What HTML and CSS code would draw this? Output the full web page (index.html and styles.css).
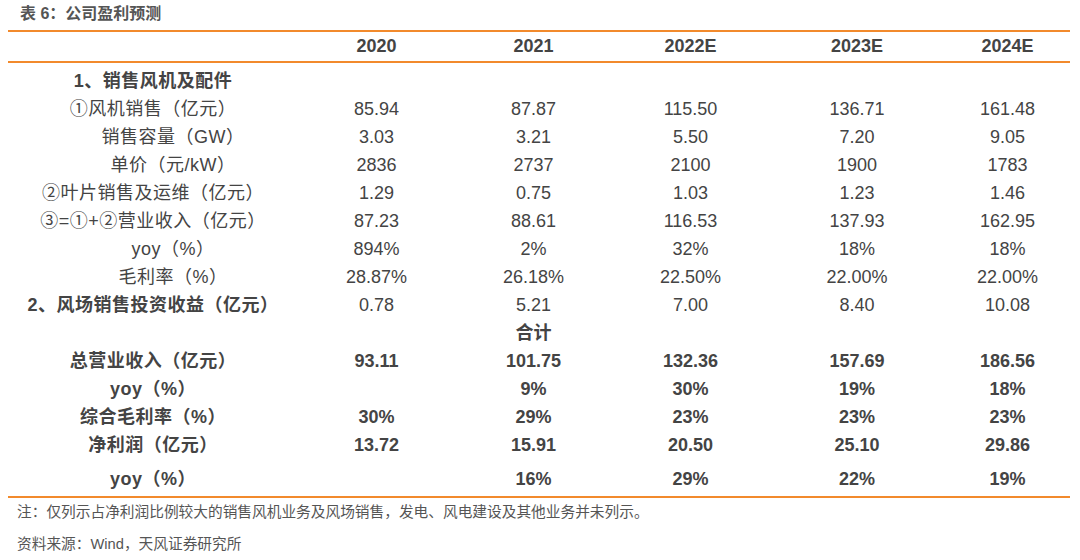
FILE: index.html
```html
<!DOCTYPE html>
<html lang="zh-CN">
<head>
<meta charset="utf-8">
<title>表 6：公司盈利预测</title>
<link rel="stylesheet" href="styles.css">
</head>
<body>
<div class="page">
  <div class="caption">表 6：公司盈利预测</div>
  <table class="forecast">
    <colgroup>
      <col class="c-label"><col class="c-a"><col class="c-a"><col class="c-a"><col class="c-b"><col class="c-c">
    </colgroup>
    <thead>
      <tr><th></th><th>2020</th><th>2021</th><th>2022E</th><th>2023E</th><th>2024E</th></tr>
    </thead>
    <tbody>
      <tr class="first"><td class="lab b">1、销售风机及配件</td><td></td><td></td><td></td><td></td><td></td></tr>
      <tr><td class="lab">①风机销售（亿元）</td><td>85.94</td><td>87.87</td><td>115.50</td><td>136.71</td><td>161.48</td></tr>
      <tr><td class="lab short">销售容量（GW）</td><td>3.03</td><td>3.21</td><td>5.50</td><td>7.20</td><td>9.05</td></tr>
      <tr><td class="lab short">单价（元/kW）</td><td>2836</td><td>2737</td><td>2100</td><td>1900</td><td>1783</td></tr>
      <tr><td class="lab">②叶片销售及运维（亿元）</td><td>1.29</td><td>0.75</td><td>1.03</td><td>1.23</td><td>1.46</td></tr>
      <tr><td class="lab">③=①+②营业收入（亿元）</td><td>87.23</td><td>88.61</td><td>116.53</td><td>137.93</td><td>162.95</td></tr>
      <tr><td class="lab short">yoy（%）</td><td>894%</td><td>2%</td><td>32%</td><td>18%</td><td>18%</td></tr>
      <tr><td class="lab short">毛利率（%）</td><td>28.87%</td><td>26.18%</td><td>22.50%</td><td>22.00%</td><td>22.00%</td></tr>
      <tr><td class="lab b">2、风场销售投资收益（亿元）</td><td>0.78</td><td>5.21</td><td>7.00</td><td>8.40</td><td>10.08</td></tr>
      <tr><td></td><td></td><td class="b">合计</td><td></td><td></td><td></td></tr>
      <tr class="bold"><td class="lab">总营业收入（亿元）</td><td>93.11</td><td>101.75</td><td>132.36</td><td>157.69</td><td>186.56</td></tr>
      <tr class="bold"><td class="lab">yoy（%）</td><td></td><td>9%</td><td>30%</td><td>19%</td><td>18%</td></tr>
      <tr class="bold"><td class="lab">综合毛利率（%）</td><td>30%</td><td>29%</td><td>23%</td><td>23%</td><td>23%</td></tr>
      <tr class="bold"><td class="lab">净利润（亿元）</td><td>13.72</td><td>15.91</td><td>20.50</td><td>25.10</td><td>29.86</td></tr>
      <tr class="bold last"><td class="lab">yoy（%）</td><td></td><td>16%</td><td>29%</td><td>22%</td><td>19%</td></tr>
    </tbody>
  </table>
  <p class="note">注：仅列示占净利润比例较大的销售风机业务及风场销售，发电、风电建设及其他业务并未列示。</p>
  <p class="note source">资料来源：Wind，天风证券研究所</p>
</div>
</body>
</html>
```
FILE: styles.css
```css
html, body {
  margin: 0;
  padding: 0;
  background: #ffffff;
}

body {
  font-family: "Liberation Sans", Arial, "Noto Sans CJK SC", sans-serif;
  color: #444444;
}

.page {
  width: 1080px;
  height: 560px;
  overflow: hidden;
}

.caption {
  margin: 4px 0 0 20px;
  height: 20px;
  line-height: 20px;
  font-size: 16px;
  font-weight: bold;
  color: #555555;
}

.forecast {
  margin: 6px 0 0 8px;
  width: 1062px;
  table-layout: fixed;
  border-collapse: collapse;
  font-size: 18px;
}

.c-label { width: 290px; }
.c-a { width: 157px; }
.c-b { width: 176px; }
.c-c { width: 125px; }

.forecast th,
.forecast td {
  padding: 0;
  text-align: center;
  white-space: nowrap;
  height: 28px;
  line-height: 28px;
  color: #444444;
}

.forecast thead tr {
  border-top: 2px solid #f28a2c;
  border-bottom: 2px solid #f28a2c;
}

.forecast thead th {
  font-weight: bold;
  height: 28px;
  line-height: 29px;
}

.forecast tr.first td {
  padding-top: 4px;
}

.forecast tr.last td {
  height: 34px;
  line-height: 32px;
  padding-top: 3px;
}

.forecast tbody tr.last {
  border-bottom: 2px solid #f28a2c;
}

.forecast .b,
.forecast tr.bold td {
  font-weight: bold;
}

.forecast .lab {
  letter-spacing: 0.5px;
}

.forecast .lab.short {
  padding-left: 40px;
}

.note {
  margin: 4px 0 0 17px;
  font-size: 14.7px;
  line-height: 20px;
  color: #555555;
}

.note.source {
  margin-top: 12px;
}
```
